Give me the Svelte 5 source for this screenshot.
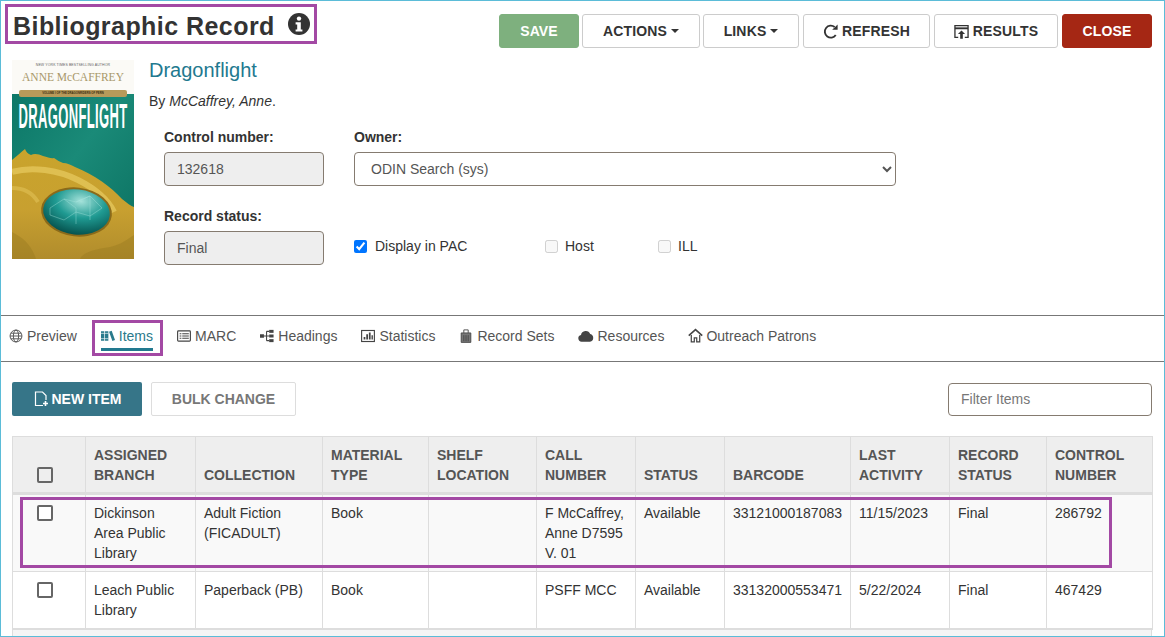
<script>
  const cols = ['c1','c2','c3','c4','c5','c6','c7','c8','c9','c10','c11'];
  const heads = [
    ['ASSIGNED','BRANCH'],['COLLECTION'],['MATERIAL','TYPE'],['SHELF','LOCATION'],['CALL','NUMBER'],['STATUS'],['BARCODE'],['LAST','ACTIVITY'],['RECORD','STATUS'],['CONTROL','NUMBER']
  ];
  const rows = [
    { cls:'odd', cells:[['Dickinson','Area Public','Library'],['Adult Fiction','(FICADULT)'],['Book'],[],['F McCaffrey,','Anne D7595','V. 01'],['Available'],['33121000187083'],['11/15/2023'],['Final'],['286792']] },
    { cls:'', cells:[['Leach Public','Library'],['Paperback (PB)'],['Book'],[],['PSFF MCC'],['Available'],['33132000553471'],['5/22/2024'],['Final'],['467429']] }
  ];
</script>

<div class="frame">
  <header class="top">
    <h1 class="title"><span>Bibliographic Record</span>
      <svg class="info" viewBox="0 0 22 22" aria-hidden="true"><circle cx="11" cy="11" r="11" fill="#333"/><circle cx="11" cy="5.6" r="2.2" fill="#fff"/><path d="M7.6 9.2h5.2v7.2h1.6v2.2H7.6v-2.2h1.6v-5H7.6z" fill="#fff"/></svg>
    </h1>
    <div class="actions">
      <button class="btn save">SAVE</button>
      <button class="btn w-actions">ACTIONS<i class="caret"></i></button>
      <button class="btn w-links">LINKS<i class="caret"></i></button>
      <button class="btn w-refresh">
        <svg class="bi" viewBox="0 0 16 16" aria-hidden="true"><path d="M13.6 11.8A6.4 6.4 0 1 1 12.4 3.2" fill="none" stroke="#333" stroke-width="2"/><path d="M9.8 6h5.8V.4z" fill="#333"/></svg>REFRESH</button>
      <button class="btn w-results">
        <svg class="bi" viewBox="0 0 16 16" aria-hidden="true"><path d="M4.5 14.3H1V1.7h14v12.6h-3.5" fill="none" stroke="#333" stroke-width="1.4"/><path d="M1 4.6h14" stroke="#333" stroke-width="2"/><path d="M8 6.8l3.8 3.9H9.4V15.6H6.6v-4.9H4.2z" fill="#333"/></svg>RESULTS</button>
      <button class="btn close">CLOSE</button>
    </div>
  </header>

  <section class="record">
    <svg class="cover" viewBox="0 0 122 199" aria-label="Dragonflight book cover">
      <defs>
        <linearGradient id="teal" x1="0" y1="0" x2="1" y2="1"><stop offset="0" stop-color="#0c7767"/><stop offset="0.45" stop-color="#1a8a78"/><stop offset="1" stop-color="#0a6f5f"/></linearGradient>
        <linearGradient id="gold" x1="0" y1="0" x2="0" y2="1"><stop offset="0" stop-color="#c9a42c"/><stop offset="0.55" stop-color="#c8a030"/><stop offset="1" stop-color="#b08c2c"/></linearGradient>
        <radialGradient id="eye" cx="0.55" cy="0.25" r="0.75"><stop offset="0" stop-color="#a5e2da"/><stop offset="0.5" stop-color="#1f9a92"/><stop offset="1" stop-color="#06534f"/></radialGradient>
      </defs>
      <rect width="122" height="199" fill="#fbfaf6"/>
      <text x="61" y="5.5" class="cv-a">NEW YORK TIMES BESTSELLING AUTHOR</text>
      <text x="61" y="21" class="cv-b">ANNE McCAFFREY</text>
      <rect y="34" width="122" height="165" fill="url(#teal)"/>
      <rect x="7" y="30" width="108" height="7" rx="2" fill="#b89a5a"/>
      <text x="61" y="34.4" class="cv-c">VOLUME I OF THE DRAGONRIDERS OF PERN</text>
      <text class="cv-d" transform="translate(61 67.5) scale(1 2.75)">DRAGONFLIGHT</text>
      <path d="M0 100C5 96 9 92 13 89c1 3 3 5 6 6 3-2 8-1 12 1 5 1 8 3 11 2 3 2 6 4 9 5 4 0 8 2 12 4 20 8 36 20 47 32 5 4 9 7 12 8v52H0z" fill="url(#gold)"/>
      <path d="M0 112c20-6 46-2 66 8 18 9 30 20 36 32" fill="none" stroke="#e6c85e" stroke-width="6" opacity=".75"/>
      <path d="M0 128c12 0 20 4 26 14" fill="none" stroke="#e6c85e" stroke-width="4" opacity=".5"/>
      <path d="M0 172c12 6 20 14 24 27h44c2-6 14-10 30-12 10-2 18-8 24-12v24H0z" fill="#97771f" opacity=".4"/>
      <ellipse cx="64.5" cy="152" rx="35.5" ry="24.5" fill="#8a6a1a" transform="rotate(6 64.5 152)"/>
      <ellipse cx="64.5" cy="152" rx="33.5" ry="22.5" fill="url(#eye)" transform="rotate(6 64.5 152)"/>
      <path d="M38 148l14-9 12 3 14-6 12 12-12 8-14-4-12 8-14-5zM52 139l12 9v16M78 136v24M64 142l14-6" fill="none" stroke="#a7e6de" stroke-width=".6" opacity=".65"/>
    </svg>

    <div class="info-col">
      <h2 class="book">Dragonflight</h2>
      <p class="by">By <em>McCaffrey, Anne</em>.</p>
      <div class="fields">
        <div class="left-fields">
          <label class="lbl" for="cn">Control number:</label>
          <input id="cn" class="ctl ro" value="132618" readonly />
          <label class="lbl second" for="rs">Record status:</label>
          <input id="rs" class="ctl ro" value="Final" readonly />
        </div>
        <div class="right-fields">
          <label class="lbl" for="ow">Owner:</label>
          <select id="ow" class="ctl sel"><option>ODIN Search (sys)</option></select>
          <div class="checks">
            <label class="chk c-pac"><input type="checkbox" checked />Display in PAC</label>
            <label class="chk c-host"><input type="checkbox" disabled />Host</label>
            <label class="chk"><input type="checkbox" disabled />ILL</label>
          </div>
        </div>
      </div>
    </div>
  </section>

  <nav class="tabs">
    <a class="tab"><svg class="ti" viewBox="0 0 16 16" aria-hidden="true"><g fill="none" stroke="#555" stroke-width="1.1"><circle cx="8" cy="8" r="6.8"/><ellipse cx="8" cy="8" rx="3" ry="6.8"/><path d="M1.2 8h13.6M2.2 4.8h11.6M2.2 11.2h11.6"/></g></svg>Preview</a>
    <a class="tab active"><svg class="ti" viewBox="0 0 16 16" aria-hidden="true"><path d="M0 2.5h3.8v11H0zM4.6 2.5h3.8v11H4.6zM9.2 3.2l3-1.1 3.8 10.4-3 1.1z" fill="#2a7a8c"/><path d="M0 5h8.4M0 11h8.4" stroke="#fff" stroke-width=".7"/></svg>Items</a>
    <a class="tab"><svg class="ti" viewBox="0 0 16 16" aria-hidden="true"><rect x=".7" y="2.2" width="14.6" height="11.6" rx="1" fill="none" stroke="#444" stroke-width="1.3"/><path d="M3 5.5h2M6 5.5h7.5M3 8h2M6 8h7.5M3 10.5h2M6 10.5h7.5" stroke="#444" stroke-width="1.2"/></svg>MARC</a>
    <a class="tab"><svg class="ti" viewBox="0 0 16 16" aria-hidden="true"><g fill="#444"><rect y="6" width="4.5" height="4"/><rect x="10.5" y="1" width="5" height="3.4"/><rect x="10.5" y="6.3" width="5" height="3.4"/><rect x="10.5" y="11.6" width="5" height="3.4"/></g><path d="M4 8h6.5M7.5 2.7v10.6M7.5 2.7h3M7.5 13.3h3" stroke="#444" stroke-width="1.2" fill="none"/></svg>Headings</a>
    <a class="tab"><svg class="ti" viewBox="0 0 16 16" aria-hidden="true"><rect x=".7" y="1.7" width="14.6" height="12.6" fill="none" stroke="#444" stroke-width="1.3"/><path d="M3 9h2v3H3zM6 6h2v6H6zM9 4h2v8H9zM12 7h1.6v5H12z" fill="#444"/></svg>Statistics</a>
    <a class="tab"><svg class="ti" viewBox="0 0 16 16" aria-hidden="true"><path d="M2.5 4.5h11v10.8h-11z" fill="#777" stroke="#444"/><path d="M5.5 4.5V1h5v3.5M5.5 7v7M8 7v7M10.5 7v7" fill="none" stroke="#444" stroke-width="1"/></svg>Record Sets</a>
    <a class="tab"><svg class="ti ti-cloud" viewBox="0 0 16 12" aria-hidden="true"><path d="M3.6 11.8A3.5 3.5 0 0 1 3 4.9 4.8 4.8 0 0 1 12.2 4a4 4 0 0 1-.2 7.8z" fill="#444"/></svg>Resources</a>
    <a class="tab"><svg class="ti ti-house" viewBox="0 0 16 16" aria-hidden="true"><path d="M.8 8.2L8 1.8l7.2 6.4" fill="none" stroke="#444" stroke-width="1.7"/><path d="M3.5 7.5v7.3h3.2v-4.3h2.6v4.3h3.2V7.5" fill="none" stroke="#444" stroke-width="1.3"/></svg>Outreach Patrons</a>
  </nav>

  <div class="toolbar">
    <button class="new"><svg class="ni" viewBox="0 0 16 16" aria-hidden="true"><path d="M10 14.5H2.5V1h7l3.5 3.5V9" fill="none" stroke="#fff" stroke-width="1.2"/><path d="M12.5 10v5M10 12.5h5" stroke="#fff" stroke-width="1.6"/></svg>NEW ITEM</button>
    <button class="bulk">BULK CHANGE</button>
    <input class="filter" placeholder="Filter Items" />
  </div>

  <table>
    <colgroup>{#each cols as c}<col class={c} />{/each}</colgroup>
    <thead>
      <tr>
        <th class="cbc"><input class="box" type="checkbox" /></th>
        {#each heads as h}<th>{#each h as l, i}{#if i}<br />{/if}{l}{/each}</th>{/each}
      </tr>
    </thead>
    <tbody>
      {#each rows as r}
        <tr class={r.cls}>
          <td class="cbc"><input class="box" type="checkbox" /></td>
          {#each r.cells as c}<td>{#each c as l, i}{#if i}<br />{/if}{l}{/each}</td>{/each}
        </tr>
      {/each}
    </tbody>
  </table>
  <div class="tfoot"></div>

  <div class="mark m-title"></div>
  <div class="mark m-tab"></div>
  <div class="mark m-row"></div>
</div>

<style>
  :global(body) { margin: 0; background: #fff; }
  * { box-sizing: border-box; }
  .frame {
    position: relative; width: 1165px; height: 637px; overflow: hidden;
    border: 1px solid #5bbcd8;
    font-family: "Liberation Sans", Arial, sans-serif; font-size: 14px; color: #333;
  }
  .top { display: flex; justify-content: space-between; align-items: flex-start; padding: 12px 12px 0 12px; height: 57px; }
  .title { margin: 0; display: flex; align-items: center; gap: 13px; font-size: 25px; font-weight: 700; line-height: 26px; letter-spacing: .45px; color: #333; }
  .info { width: 22px; height: 22px; margin-top: -4px; }
  .actions { display: flex; gap: 3px; margin-top: 1px; }
  .btn {
    height: 34px; padding: 0; border: 1px solid #ccc; border-radius: 3px; background: #fff; color: #333;
    font: 700 14px/1 "Liberation Sans", Arial, sans-serif; letter-spacing: .15px;
    display: flex; align-items: center; justify-content: center;
  }
  .save { width: 80px; background: #7eb07e; border-color: #7eb07e; color: #fff; }
  .w-actions { width: 118px; }
  .w-links { width: 96px; }
  .w-refresh { width: 127px; margin-left: 1px; }
  .w-results { width: 124px; margin-left: 1px; }
  .close { width: 90px; margin-left: 1px; background: #a52714; border-color: #a52714; color: #fff; }
  .caret { display: inline-block; margin-left: 4px; border: 4px solid transparent; border-top-color: #333; border-bottom: 0; }
  .bi { width: 15px; height: 15px; margin-right: 4px; }

  .record { display: flex; padding-left: 11px; height: 257px; }
  .cover { width: 122px; height: 199px; margin-top: 2px; flex: none; }
  .cv-a { font: 400 3.5px "Liberation Sans", sans-serif; letter-spacing: .1px; fill: #666; text-anchor: middle; }
  .cv-b { font: 400 11.5px "Liberation Serif", serif; fill: #a8986a; text-anchor: middle; }
  .cv-c { font: 700 2.8px "Liberation Sans", sans-serif; fill: #3a2c10; text-anchor: middle; }
  .cv-d { font: 700 13px "Liberation Sans", sans-serif; letter-spacing: .35px; fill: #fff; text-anchor: middle; }
  .info-col { margin-left: 15px; flex: 1; }
  .book { margin: 0; font-size: 20px; font-weight: 400; line-height: 24px; color: #22798f; }
  .by { margin: 9px 0 0; line-height: 20px; }
  .fields { display: flex; padding: 16px 0 0 15px; }
  .left-fields { width: 190px; }
  .right-fields { width: 542px; }
  .lbl { display: block; font-weight: 700; line-height: 20px; height: 25px; }
  .second { margin-top: 20px; }
  .ctl { display: block; height: 34px; border: 1px solid #857b70; border-radius: 4px; font: 14px "Liberation Sans", Arial, sans-serif; color: #555; }
  .ro { width: 160px; background: #eee; padding: 0 12px; outline: 0; }
  .sel { width: 542px; background: #fff; padding: 0 12px; }
  .checks { display: flex; align-items: center; margin-top: 48px; height: 24px; }
  .chk { display: flex; align-items: center; line-height: 20px; color: #333; width: 113px; }
  .c-pac { width: 191px; }
  .chk input { margin: 0 7px 0 0; width: 13px; height: 13px; }
  .c-pac input { margin-right: 8px; }

  .tabs { display: flex; height: 47px; border-top: 1px solid #777; border-bottom: 1px solid #777; padding: 0 0 6px 8px; gap: 24px; align-items: center; }
  .tab { position: relative; display: flex; align-items: center; color: #555; line-height: 20px; }
  .ti { width: 14px; height: 14px; margin-right: 4px; flex: none; }
  .ti-cloud { width: 16px; height: 12px; margin-right: 3px; }
  .ti-house { width: 15px; height: 15px; margin-right: 3px; }
  .active { color: #2a7a8c; }
  .active::after { content: ""; position: absolute; left: 0; right: 0; top: 22px; height: 3px; background: #22798f; }

  .toolbar { display: flex; align-items: flex-start; padding: 20px 12px 0 11px; height: 74px; }
  .new { width: 130px; height: 34px; background: #367588; border: 0; border-radius: 2px; color: #fff; font: 700 14px "Liberation Sans", Arial, sans-serif; display: flex; align-items: center; justify-content: center; }
  .ni { width: 16px; height: 16px; margin-right: 3px; }
  .bulk { margin-left: 9px; width: 145px; height: 34px; background: #fff; border: 1px solid #ddd; border-radius: 2px; color: #777; font: 700 14px "Liberation Sans", Arial, sans-serif; }
  .filter { margin-left: auto; margin-top: 1px; width: 204px; height: 33px; border: 1px solid #857b70; border-radius: 4px; padding: 0 12px 2px; font: 14px "Liberation Sans", Arial, sans-serif; }
  .filter::placeholder { color: #777; opacity: 1; }

  table { margin-left: 11px; width: 1140px; table-layout: fixed; border-collapse: collapse; }
  .c1 { width: 73px; } .c2 { width: 110px; } .c3 { width: 127px; } .c4 { width: 106px; }
  .c5 { width: 108px; } .c6 { width: 99px; } .c7 { width: 89px; } .c8 { width: 126px; }
  .c9 { width: 99px; } .c10 { width: 97px; } .c11 { width: 106px; }
  th, td { border: 1px solid #ddd; padding: 8px; text-align: left; vertical-align: top; line-height: 20px; font-size: 14px; }
  th { vertical-align: bottom; background: #eee; color: #555; font-weight: 700; border-bottom-width: 3px; padding-bottom: 7px; height: 57px; }
  .odd td { background: #f9f9f9; }
  td.cbc, th.cbc { text-align: center; }
  td { height: 77px; }
  tbody tr:last-child td { height: 57px; border-bottom-width: 2px; }
  .box { appearance: none; display: block; margin: 0 auto 2px; width: 16px; height: 16px; border: 2px solid #666; border-radius: 2px; background: #fff; position: relative; left: -4px; }
  th .box { background: #eee; margin-bottom: 2px; }
  td .box { margin-top: 2px; }
  .tfoot { margin-left: 11px; width: 1140px; height: 8px; background: #f5f5f5; border: 1px solid #ddd; border-top: 0; }

  .mark { position: absolute; border: 3px solid #a349a4; pointer-events: none; }
  .m-title { left: 4px; top: 3px; width: 312px; height: 40px; }
  .m-tab { left: 91px; top: 319px; width: 71px; height: 36px; }
  .m-row { left: 19px; top: 496px; width: 1092px; height: 71px; }
</style>
